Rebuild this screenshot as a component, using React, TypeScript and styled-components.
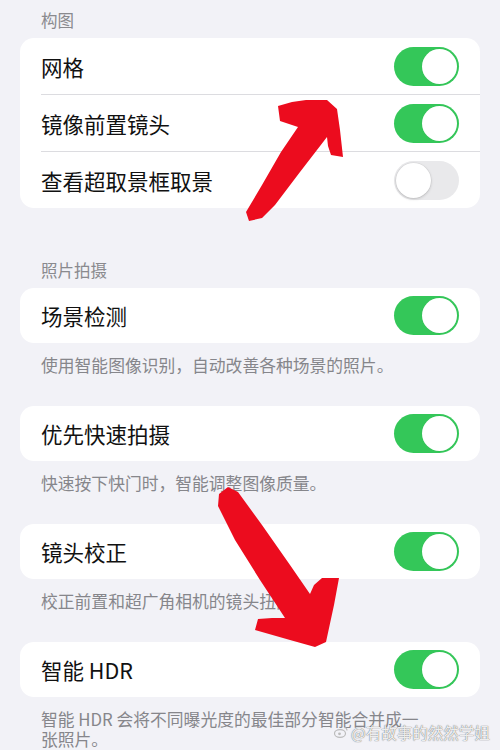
import React from 'react';
import styled, { createGlobalStyle } from 'styled-components';

const GlobalStyle = createGlobalStyle`
  html, body {
    margin: 0;
    padding: 0;
    background: #f2f2f7;
  }
  body {
    font-family: "Noto Sans CJK SC", "Noto Sans", sans-serif;
    -webkit-font-smoothing: antialiased;
  }
`;

type Row = { label: string; on: boolean };
type Group = { title?: string; rows: Row[]; footer?: string };

// settings shown on the camera page
const groups: Group[] = [
  {
    title: '构图',
    rows: [
      { label: '网格', on: true },
      { label: '镜像前置镜头', on: true },
      { label: '查看超取景框取景', on: false },
    ],
  },
  {
    title: '照片拍摄',
    rows: [{ label: '场景检测', on: true }],
    footer: '使用智能图像识别，自动改善各种场景的照片。',
  },
  {
    rows: [{ label: '优先快速拍摄', on: true }],
    footer: '快速按下快门时，智能调整图像质量。',
  },
  {
    rows: [{ label: '镜头校正', on: true }],
    footer: '校正前置和超广角相机的镜头扭曲。',
  },
  {
    rows: [{ label: '智能 HDR', on: true }],
    footer: '智能 HDR 会将不同曝光度的最佳部分智能合并成一张照片。',
  },
];

const App: React.FC = () => {
  return (
    <>
      <GlobalStyle />
      <Page>
        {groups.map((group, gi) => (
          <Section key={gi} first={gi === 0} titled={!!group.title}>
            {group.title && <SectionTitle>{group.title}</SectionTitle>}
            <Card>
              {group.rows.map((row, ri) => (
                <RowItem key={row.label} tall={group.rows.length > 1} divided={ri > 0}>
                  <Label>{row.label}</Label>
                  <Toggle on={row.on}>
                    <Knob on={row.on} />
                  </Toggle>
                </RowItem>
              ))}
            </Card>
            {group.footer && <Footer>{group.footer}</Footer>}
          </Section>
        ))}

        <Arrows viewBox="0 0 500 750" width="500" height="750">
          <polygon
            points="278,106 292,102 306,100 327,100 337,109 340,130 343,157 331,155 328,146 327,137 300,172 275,205 262,218 249,221 246,212 262,185 281,152 298,127 289,124 280,121"
            fill="#ec0c1e"
          />
          <polygon
            points="219,494 228,487 238,492 262,525 290,565 310,594 314,585 322,578 339,578 334,605 326,642 315,647 290,640 255,630 258,619 272,618 285,618 260,580 235,540 218,506"
            fill="#ec0c1e"
          />
        </Arrows>

        <Watermark>
          <WeiboMark viewBox="0 0 14 12" width="14" height="12">
            <ellipse cx="6" cy="7.5" rx="5.5" ry="3.8" fill="none" stroke="#bbb" strokeWidth="1.2" />
            <circle cx="5.5" cy="7.8" r="1.4" fill="#bbb" />
            <path d="M10 1.5 a3 3 0 0 1 3 3" fill="none" stroke="#bbb" strokeWidth="1.1" />
          </WeiboMark>
          @有故事的然然学姐
        </Watermark>
      </Page>
    </>
  );
};

export default App;

const Page = styled.div`
  position: relative;
  width: 500px;
  height: 750px;
  overflow: hidden;
  padding: 8px 20px 0;
  box-sizing: border-box;
  background: #f2f2f7;
`;

const Section = styled.section<{ first: boolean; titled: boolean }>`
  margin-top: ${({ first, titled }) => (first ? '0' : titled ? '50px' : '31px')};
`;

const SectionTitle = styled.div`
  padding-left: 21px;
  margin-bottom: 6px;
  font-size: 16.5px;
  line-height: 24px;
  color: #8a8a8e;
`;

const Card = styled.div`
  background: #ffffff;
  border-radius: 14px;
  overflow: hidden;
`;

const RowItem = styled.div<{ tall: boolean; divided: boolean }>`
  display: flex;
  align-items: center;
  justify-content: space-between;
  height: ${({ tall }) => (tall ? '56px' : '55px')};
  padding: 0 21px;
  border-top: ${({ divided }) => (divided ? '1px solid #dcdce0' : 'none')};
  margin-left: ${({ divided }) => (divided ? '21px' : '0')};
  padding-left: ${({ divided }) => (divided ? '0' : '21px')};
`;

const Label = styled.span`
  font-size: 21.5px;
  color: #111111;
`;

const Toggle = styled.div<{ on: boolean }>`
  position: relative;
  width: 65px;
  height: 39px;
  border-radius: 20px;
  background: ${({ on }) => (on ? '#34c759' : '#e9e9eb')};
  flex-shrink: 0;
`;

const Knob = styled.div<{ on: boolean }>`
  position: absolute;
  top: 2px;
  left: ${({ on }) => (on ? '28px' : '2px')};
  width: 35px;
  height: 35px;
  border-radius: 50%;
  background: #ffffff;
  box-shadow: ${({ on }) =>
    on ? '0 0 0 0.5px rgba(0,0,0,0.04)' : '0 1px 3px rgba(0,0,0,0.18), 0 0 0 0.5px rgba(0,0,0,0.06)'};
`;

const Footer = styled.div`
  margin-top: 12px;
  padding: 0 52px 0 21px;
  font-size: 16.8px;
  line-height: 20px;
  color: #86868b;
`;

const Arrows = styled.svg`
  position: absolute;
  top: 0;
  left: 0;
  pointer-events: none;
`;

const Watermark = styled.div`
  position: absolute;
  left: 334px;
  top: 722px;
  display: flex;
  align-items: center;
  gap: 3px;
  font-size: 15.5px;
  line-height: 20px;
  color: rgba(255, 255, 255, 0.9);
  text-shadow: 0 0 1px rgba(90, 90, 90, 0.8), 0 0 1px rgba(90, 90, 90, 0.6);
`;

const WeiboMark = styled.svg`
  display: block;
`;
